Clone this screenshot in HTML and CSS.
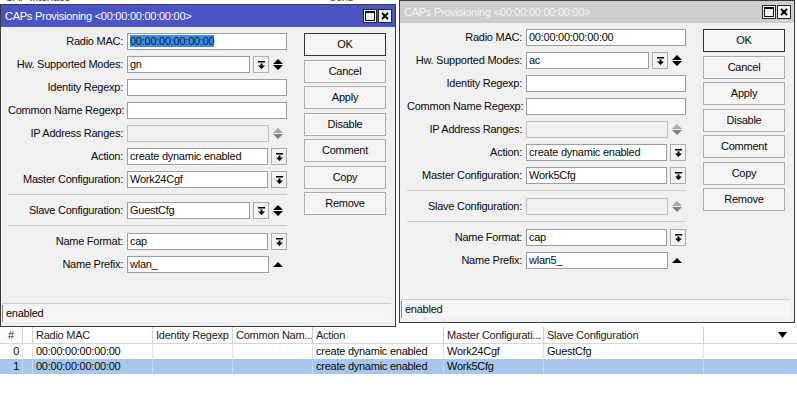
FILE: index.html
```html
<!DOCTYPE html>
<html lang="en">
<head>
    <meta charset="UTF-8">
    <meta name="viewport" content="width=device-width, initial-scale=1.0">
    <title>CAPs Provisioning</title>
    <link rel="stylesheet" href="styles.css">
</head>
<body>
<div class="desktop">

    <!-- window behind the dialogs -->
    <div class="backwin">
        <div class="topstrip">
            <span class="t1">CAP Interface</span>
            <span class="t2">trons</span>
        </div>
        <div class="covered"></div>
        <div class="list">
            <div class="lrow lhead">
                <div class="c num center">#</div>
                <div class="c"></div>
                <div class="c">Radio MAC</div>
                <div class="c">Identity Regexp</div>
                <div class="c">Common Nam...</div>
                <div class="c">Action</div>
                <div class="c">Master Configurati...</div>
                <div class="c">Slave Configuration</div>
                <div class="c last">
                    <svg width="9" height="6" viewBox="0 0 9 6"><path d="M0 0h9L4.5 6z"/></svg>
                </div>
            </div>
            <div class="lrow">
                <div class="c num">0</div>
                <div class="c"></div>
                <div class="c">00:00:00:00:00:00</div>
                <div class="c"></div>
                <div class="c"></div>
                <div class="c">create dynamic enabled</div>
                <div class="c">Work24Cgf</div>
                <div class="c">GuestCfg</div>
                <div class="c last"></div>
            </div>
            <div class="lrow selected">
                <div class="c num">1</div>
                <div class="c"></div>
                <div class="c">00:00:00:00:00:00</div>
                <div class="c"></div>
                <div class="c"></div>
                <div class="c">create dynamic enabled</div>
                <div class="c">Work5Cfg</div>
                <div class="c"></div>
                <div class="c last"></div>
            </div>
        </div>
    </div>

    <!-- left dialog (active) -->
    <div class="dialog dlg-left active">
        <div class="titlebar">
            <span class="title">CAPs Provisioning &lt;00:00:00:00:00:00&gt;</span>
            <div class="tbtn"><span class="maxbox"></span></div>
            <div class="tbtn">
                <svg width="8" height="8" viewBox="0 0 8 8"><path d="M1 1l6 6M7 1L1 7" stroke="#000" stroke-width="2"/></svg>
            </div>
        </div>
        <div class="dbody">
            <div class="form">
                <div class="row"><label>Radio MAC:</label>
                    <div class="field"><div class="input"><span class="sel">00:00:00:00:00:00</span></div></div></div>
                <div class="row"><label>Hw. Supported Modes:</label>
                    <div class="field"><div class="input">gn</div>
                        <div class="drop"><svg width="7" height="8" viewBox="0 0 7 8"><path d="M0 0h7v1.5H0zM2.5 2.5h2v2H7L3.5 8 0 4.5h2.5z"/></svg></div>
                        <div class="spin"><svg width="10" height="11" viewBox="0 0 10 11"><path d="M5 0l5 5H0zM0 6h10l-5 5z"/></svg></div></div></div>
                <div class="row"><label>Identity Regexp:</label>
                    <div class="field"><div class="input"></div></div></div>
                <div class="row"><label>Common Name Regexp:</label>
                    <div class="field"><div class="input"></div></div></div>
                <div class="row"><label>IP Address Ranges:</label>
                    <div class="field"><div class="input off"></div>
                        <div class="spin off"><svg width="10" height="11" viewBox="0 0 10 11"><path class="up" d="M5 0l5 5H0z"/><path d="M0 6h10l-5 5z"/></svg></div></div></div>
                <div class="row"><label>Action:</label>
                    <div class="field"><div class="input">create dynamic enabled</div>
                        <div class="drop"><svg width="7" height="8" viewBox="0 0 7 8"><path d="M0 0h7v1.5H0zM2.5 2.5h2v2H7L3.5 8 0 4.5h2.5z"/></svg></div></div></div>
                <div class="row"><label>Master Configuration:</label>
                    <div class="field"><div class="input">Work24Cgf</div>
                        <div class="drop"><svg width="7" height="8" viewBox="0 0 7 8"><path d="M0 0h7v1.5H0zM2.5 2.5h2v2H7L3.5 8 0 4.5h2.5z"/></svg></div></div></div>
                <div class="sep"></div>
                <div class="row"><label>Slave Configuration:</label>
                    <div class="field"><div class="input">GuestCfg</div>
                        <div class="drop"><svg width="7" height="8" viewBox="0 0 7 8"><path d="M0 0h7v1.5H0zM2.5 2.5h2v2H7L3.5 8 0 4.5h2.5z"/></svg></div>
                        <div class="spin"><svg width="10" height="11" viewBox="0 0 10 11"><path d="M5 0l5 5H0zM0 6h10l-5 5z"/></svg></div></div></div>
                <div class="sep"></div>
                <div class="row"><label>Name Format:</label>
                    <div class="field"><div class="input">cap</div>
                        <div class="drop"><svg width="7" height="8" viewBox="0 0 7 8"><path d="M0 0h7v1.5H0zM2.5 2.5h2v2H7L3.5 8 0 4.5h2.5z"/></svg></div></div></div>
                <div class="row"><label>Name Prefix:</label>
                    <div class="field"><div class="input">wlan_</div>
                        <div class="spin"><svg width="10" height="5" viewBox="0 0 10 5"><path d="M5 0l5 5H0z"/></svg></div></div></div>
            </div>
            <div class="buttons">
                <div class="btn default">OK</div>
                <div class="btn">Cancel</div>
                <div class="btn">Apply</div>
                <div class="btn">Disable</div>
                <div class="btn">Comment</div>
                <div class="btn">Copy</div>
                <div class="btn">Remove</div>
            </div>
        </div>
        <div class="status"><div class="statbox">enabled</div></div>
    </div>

    <!-- right dialog (inactive) -->
    <div class="dialog dlg-right">
        <div class="titlebar">
            <span class="title">CAPs Provisioning &lt;00:00:00:00:00:00&gt;</span>
            <div class="tbtn"><span class="maxbox"></span></div>
            <div class="tbtn">
                <svg width="8" height="8" viewBox="0 0 8 8"><path d="M1 1l6 6M7 1L1 7" stroke="#000" stroke-width="2"/></svg>
            </div>
        </div>
        <div class="dbody">
            <div class="form">
                <div class="row"><label>Radio MAC:</label>
                    <div class="field"><div class="input">00:00:00:00:00:00</div></div></div>
                <div class="row"><label>Hw. Supported Modes:</label>
                    <div class="field"><div class="input">ac</div>
                        <div class="drop"><svg width="7" height="8" viewBox="0 0 7 8"><path d="M0 0h7v1.5H0zM2.5 2.5h2v2H7L3.5 8 0 4.5h2.5z"/></svg></div>
                        <div class="spin"><svg width="10" height="11" viewBox="0 0 10 11"><path d="M5 0l5 5H0zM0 6h10l-5 5z"/></svg></div></div></div>
                <div class="row"><label>Identity Regexp:</label>
                    <div class="field"><div class="input"></div></div></div>
                <div class="row"><label>Common Name Regexp:</label>
                    <div class="field"><div class="input"></div></div></div>
                <div class="row"><label>IP Address Ranges:</label>
                    <div class="field"><div class="input off"></div>
                        <div class="spin off"><svg width="10" height="11" viewBox="0 0 10 11"><path class="up" d="M5 0l5 5H0z"/><path d="M0 6h10l-5 5z"/></svg></div></div></div>
                <div class="row"><label>Action:</label>
                    <div class="field"><div class="input">create dynamic enabled</div>
                        <div class="drop"><svg width="7" height="8" viewBox="0 0 7 8"><path d="M0 0h7v1.5H0zM2.5 2.5h2v2H7L3.5 8 0 4.5h2.5z"/></svg></div></div></div>
                <div class="row"><label>Master Configuration:</label>
                    <div class="field"><div class="input">Work5Cfg</div>
                        <div class="drop"><svg width="7" height="8" viewBox="0 0 7 8"><path d="M0 0h7v1.5H0zM2.5 2.5h2v2H7L3.5 8 0 4.5h2.5z"/></svg></div></div></div>
                <div class="sep"></div>
                <div class="row"><label>Slave Configuration:</label>
                    <div class="field"><div class="input off"></div>
                        <div class="spin off"><svg width="10" height="11" viewBox="0 0 10 11"><path class="up" d="M5 0l5 5H0z"/><path d="M0 6h10l-5 5z"/></svg></div></div></div>
                <div class="sep"></div>
                <div class="row"><label>Name Format:</label>
                    <div class="field"><div class="input">cap</div>
                        <div class="drop"><svg width="7" height="8" viewBox="0 0 7 8"><path d="M0 0h7v1.5H0zM2.5 2.5h2v2H7L3.5 8 0 4.5h2.5z"/></svg></div></div></div>
                <div class="row"><label>Name Prefix:</label>
                    <div class="field"><div class="input">wlan5_</div>
                        <div class="spin"><svg width="10" height="5" viewBox="0 0 10 5"><path d="M5 0l5 5H0z"/></svg></div></div></div>
            </div>
            <div class="buttons">
                <div class="btn default">OK</div>
                <div class="btn">Cancel</div>
                <div class="btn">Apply</div>
                <div class="btn">Disable</div>
                <div class="btn">Comment</div>
                <div class="btn">Copy</div>
                <div class="btn">Remove</div>
            </div>
        </div>
        <div class="status"><div class="statbox">enabled</div></div>
    </div>

</div>
</body>
</html>
```

FILE: styles.css
```css
* {
  margin: 0;
  padding: 0;
  box-sizing: border-box;
}

body {
  width: 797px;
  height: 396px;
  overflow: hidden;
  background: #fff;
  font-family: "Liberation Sans", Arial, sans-serif;
  font-size: 11px;
  letter-spacing: -0.25px;
  color: #0a0a0a;
}

.desktop {
  position: relative;
  width: 797px;
  height: 396px;
}

/* background window */
.backwin {
  display: flex;
  flex-direction: column;
  height: 100%;
}

.topstrip {
  height: 4px;
  overflow: hidden;
  display: flex;
  color: #333;
  line-height: 13px;
}
.topstrip span {
  margin-top: -9px;
}
.t1 {
  margin-left: 5px;
  width: 325px;
}

.covered {
  height: 323px;
}

.list {
  display: flex;
  flex-direction: column;
}

.lrow {
  display: grid;
  grid-template-columns: 23px 10px 120px 80px 80px 131px 100px 160px 1fr;
  height: 15px;
  line-height: 15px;
}
.lrow .c {
  border-right: 1px solid #e4e4e4;
  padding-left: 3px;
  white-space: nowrap;
  overflow: hidden;
}
.lrow .c.last {
  border-right: 0;
}
.lrow .num {
  text-align: right;
  padding-right: 3px;
}
.lrow .center {
  text-align: center;
  padding: 0;
}

.lhead {
  height: 17px;
  line-height: 16px;
  border-bottom: 1px solid #d6d6d6;
  color: #222;
}
.lhead .c {
  border-right-color: #d0d0d0;
}
.lhead .last {
  display: flex;
  justify-content: flex-end;
  align-items: center;
  padding-right: 10px;
}

.lrow.selected {
  background: #a6c6ec;
}
.lrow.selected .c {
  border-right-color: #c3d8f2;
}

/* dialogs */
.dialog {
  position: absolute;
  width: 396px;
  height: 323px;
  border: 1px solid #3c3c3c;
  background: #f0f0f0;
  display: flex;
  flex-direction: column;
}
.dlg-left {
  left: 0;
  top: 4px;
}
.dlg-right {
  left: 399px;
  top: 0;
}

.titlebar {
  height: 22px;
  display: flex;
  align-items: center;
  padding: 0 3px 0 4px;
  background: #cdcdcd;
  color: #f4f4f4;
}
.active .titlebar {
  background: #4c53c4;
  color: #fff;
}
.title {
  flex: 1;
}

.tbtn {
  width: 14px;
  height: 14px;
  margin-left: 1px;
  border: 1px solid #2a2a2a;
  background: #efefef;
  display: flex;
  align-items: center;
  justify-content: center;
}
.maxbox {
  width: 10px;
  height: 10px;
  border: 1px solid #111;
  border-top-width: 2px;
}

.dbody {
  flex: 1;
  display: flex;
  padding: 6px 0 0 7px;
}

.form {
  width: 279px;
  display: flex;
  flex-direction: column;
}

.row {
  display: grid;
  grid-template-columns: 115px 160px;
  column-gap: 4px;
  height: 17px;
  margin-bottom: 6px;
}
.row label {
  text-align: right;
  line-height: 17px;
  white-space: nowrap;
}

.field {
  display: flex;
  height: 17px;
}
.input {
  flex: 1;
  border: 1px solid #9c9c9c;
  background: #fff;
  padding-left: 2px;
  line-height: 15px;
  white-space: nowrap;
  overflow: hidden;
}
.input.off {
  border-color: #c2c2c2;
  background: #f0f0f0;
}
.sel {
  background: #3d8de0;
  color: #0c1c4c;
}

.drop {
  width: 16px;
  margin-left: 3px;
  border: 1px solid #adadad;
  background: #f2f2f2;
  display: flex;
  align-items: center;
  justify-content: center;
}
.spin {
  width: 18px;
  display: flex;
  align-items: center;
  justify-content: center;
}
.spin.off svg {
  fill: #7e7e7e;
}
.spin.off .up {
  fill: #a8a8a8;
}

.sep {
  height: 2px;
  border-top: 1px solid #cdcdcd;
  margin-bottom: 6px;
}

.buttons {
  margin-left: 17px;
  width: 82px;
  display: flex;
  flex-direction: column;
}
.btn {
  height: 23px;
  margin-bottom: 3.5px;
  border: 1px solid #adadad;
  background: #f4f4f4;
  text-align: center;
  line-height: 21px;
}
.btn.default {
  border-color: #333;
}

.status {
  margin: 0 4px 4px 1px;
  border-top: 1px solid #cfcfcf;
  padding-top: 1px;
}
.statbox {
  height: 17px;
  border-left: 1px solid #8a8a8a;
  background: #f4f4f4;
  padding-left: 3px;
  line-height: 17px;
}
```
